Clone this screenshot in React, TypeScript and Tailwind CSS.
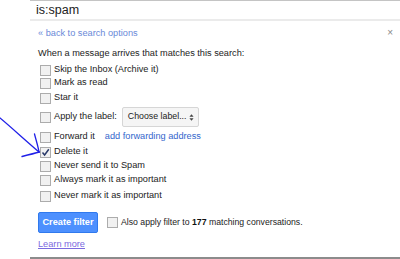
import React from 'react';

const rows = [
  { label: 'Never send it to Spam', mt: 'mt-0' },
  { label: 'Always mark it as important', mt: 'mt-0' },
  { label: 'Never mark it as important', mt: 'mt-[2px]' },
];

function Box({ checked = false }: { checked?: boolean }) {
  return (
    <span className="relative inline-block w-[11px] h-[11px] border border-[#acacac] bg-[#f1f1f1] shrink-0">
      {checked && (
        <svg viewBox="0 0 11 11" className="absolute -left-[1px] -top-[1px] w-[11px] h-[11px]">
          <path d="M2.5 5.5 L4.6 8 L8.8 2.2" fill="none" stroke="#2a3a6a" strokeWidth="1.5" />
        </svg>
      )}
    </span>
  );
}

function Row({ label, className = '', checked = false, children }: { label: string; className?: string; checked?: boolean; children?: React.ReactNode }) {
  return (
    <div className={`flex items-center h-[14px] ${className}`}>
      <Box checked={checked} />
      <span className="ml-[3px] text-[#222]">{label}</span>
      {children}
    </div>
  );
}

export default function App() {
  return (
    <div className="relative w-[400px] h-[259px] bg-white overflow-hidden text-[9.2px] text-[#222]" style={{ fontFamily: '"Liberation Sans", Arial, sans-serif' }}>
      {/* search box */}
      <div className="ml-[30px] h-[21px] border-t border-[#c4c4c4] border-b-2 border-b-[#ebebeb] flex items-center pl-[6px]">
        <span className="text-[12.5px] leading-[18px] text-[#222]">is:spam</span>
      </div>

      <div className="relative ml-[30px] pl-[8px]">
        <span className="absolute right-[7px] top-[1px] text-[10px] leading-[10px] text-[#888]">×</span>

        <div className="mt-[6px] h-[12px] leading-[12px] text-[#6a89d8]">« back to search options</div>
        <div className="mt-[8px] h-[12px] leading-[12px]">When a message arrives that matches this search:</div>

        <div className="mt-[4px] ml-[2px] flex flex-col">
          <Row label="Skip the Inbox (Archive it)" />
          <Row label="Mark as read" className="-mt-[1px]" />
          <Row label="Star it" className="mt-[1px]" />
          <Row label="Apply the label:" className="h-[20px] mt-[2px]">
            <div className="ml-[5px] h-[20px] w-[77px] border border-[#d6d6d6] rounded-[2px] bg-[#f5f5f5] flex items-center justify-between pl-[5px] pr-[4px]">
              <span className="text-[8.8px] text-[#222]">Choose label...</span>
              <svg viewBox="0 0 6 10" className="w-[5px] h-[9px]">
                <path d="M0.5 4 L3 1 L5.5 4 Z M0.5 6 L3 9 L5.5 6 Z" fill="#444" />
              </svg>
            </div>
          </Row>
          <Row label="Forward it" className="mt-[3px]">
            <span className="ml-[10px] text-[#3366cc]">add forwarding address</span>
          </Row>
          <Row label="Delete it" className="mt-[1px]" checked />
          {rows.map((r) => (
            <Row key={r.label} label={r.label} className={r.mt} />
          ))}
        </div>

        <div className="mt-[9px] flex items-center">
          <button className="h-[21px] w-[60px] rounded-[2px] bg-[#4d90fe] border border-[#3079ed] text-white font-bold text-[9.2px]">
            Create filter
          </button>
          <span className="ml-[9px] flex items-center">
            <Box />
            <span className="ml-[3px] text-[8.7px] text-[#222]">
              Also apply filter to <b className="text-[#111]">177</b> matching conversations.
            </span>
          </span>
        </div>

        <div className="mt-[6px] h-[10px] leading-[10px]">
          <span className="underline text-[#7b6ae0]">Learn more</span>
        </div>
      </div>

      <div className="absolute left-[30px] right-0 bottom-0 h-[2px] bg-[#8c8c8c]" />

      {/* hand-drawn arrow */}
      <svg className="absolute left-0 top-[110px]" width="45" height="55" viewBox="0 110 45 55">
        <path d="M0 118 C12 128 26 141 39 152" fill="none" stroke="#2020e8" strokeWidth="1.3" strokeLinecap="round" />
        <path d="M34.5 134 C36 140 38 146 39 152" fill="none" stroke="#2020e8" strokeWidth="1.3" strokeLinecap="round" />
        <path d="M22 156.5 C28 155 34 153.5 39.5 152" fill="none" stroke="#2020e8" strokeWidth="1.3" strokeLinecap="round" />
      </svg>
    </div>
  );
}
